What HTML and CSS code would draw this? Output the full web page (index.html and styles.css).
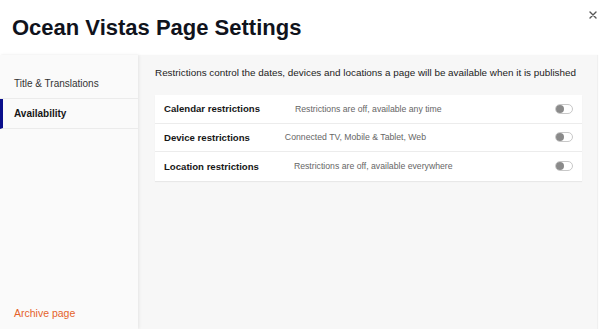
FILE: index.html
```html
<!DOCTYPE html>
<html lang="en">
<head>
    <meta charset="UTF-8">
    <meta name="viewport" content="width=device-width, initial-scale=1.0">
    <title>Ocean Vistas Page Settings</title>
    <link rel="stylesheet" href="styles.css">
</head>
<body>
    <div class="dialog">
        <header class="dialog-header">
            <h1>Ocean Vistas Page Settings</h1>
            <button class="close-btn" aria-label="Close">
                <svg width="8" height="8" viewBox="0 0 8 8">
                    <path d="M1 1 L7 7 M7 1 L1 7" stroke="#555" stroke-width="1.4" stroke-linecap="round"/>
                </svg>
            </button>
        </header>
        <div class="dialog-body">
            <nav class="sidebar">
                <a class="nav-item">Title &amp; Translations</a>
                <a class="nav-item active">Availability</a>
                <a class="archive-link">Archive page</a>
            </nav>
            <main class="content">
                <p class="intro">Restrictions control the dates, devices and locations a page will be available when it is published</p>
                <div class="card">
                    <div class="row">
                        <span class="row-label">Calendar restrictions</span>
                        <span class="row-value">Restrictions are off, available any time</span>
                        <span class="toggle"></span>
                    </div>
                    <div class="row">
                        <span class="row-label">Device restrictions</span>
                        <span class="row-value">Connected TV, Mobile &amp; Tablet, Web</span>
                        <span class="toggle"></span>
                    </div>
                    <div class="row">
                        <span class="row-label">Location restrictions</span>
                        <span class="row-value">Restrictions are off, available everywhere</span>
                        <span class="toggle"></span>
                    </div>
                </div>
            </main>
        </div>
    </div>
</body>
</html>
```

FILE: styles.css
```css
/* General styles */
body {
    margin: 0;
    font-family: "Liberation Sans", Arial, sans-serif;
    color: #1a1a1a;
    background: #ffffff;
}

.dialog {
    display: flex;
    flex-direction: column;
    height: 329px;
}

.dialog-header {
    height: 55px;
    display: flex;
    align-items: flex-start;
    justify-content: space-between;
    background: #ffffff;
}

.dialog-header h1 {
    margin: 15px 0 0 12px;
    font-size: 22px;
    font-weight: 700;
    color: #10131c;
}

.close-btn {
    border: none;
    background: none;
    padding: 0;
    margin: 7px 3px 0 0;
    width: 8px;
    height: 8px;
    cursor: pointer;
}

.dialog-body {
    flex: 1;
    display: flex;
    background: #f7f7f7;
    margin-right: 3px;
    box-shadow: 1px 0 1px rgba(0, 0, 0, 0.06);
}

/* Sidebar */
.sidebar {
    width: 138px;
    display: flex;
    flex-direction: column;
    padding-top: 14px;
    background: #fafafa;
    box-shadow: 1px 0 3px rgba(0, 0, 0, 0.08);
}

.nav-item {
    height: 29px;
    line-height: 29px;
    padding-left: 14px;
    font-size: 10px;
    color: #333333;
    border-bottom: 1px solid #ebebeb;
}

.nav-item.active {
    font-weight: 700;
    color: #161616;
    padding-left: 11px;
    border-left: 3px solid #0a0f8c;
}

.archive-link {
    margin-top: auto;
    padding: 0 0 10px 14px;
    font-size: 10.5px;
    color: #e5622a;
}

/* Main content */
.content {
    flex: 1;
    padding: 0 15px 0 17px;
}

.intro {
    margin: 12px 0 16px 0;
    font-size: 9.9px;
    line-height: 12px;
    color: #222222;
    white-space: nowrap;
}

.card {
    background: #ffffff;
    box-shadow: 0 1px 1px rgba(0, 0, 0, 0.06);
}

.row {
    box-sizing: border-box;
    display: flex;
    align-items: center;
    height: 28.5px;
    padding: 0 9px;
    border-bottom: 1px solid #ececec;
}

.row:last-child {
    border-bottom: none;
}

.row-label {
    font-size: 9.6px;
    font-weight: 700;
    color: #161616;
    margin-right: 35px;
}

.row-value {
    flex: 1;
    font-size: 8.7px;
    color: #666666;
}

.toggle {
    position: relative;
    width: 16px;
    height: 8px;
    border: 1px solid #c8c8c8;
    border-radius: 5px;
    background: #ffffff;
}

.toggle::after {
    content: '';
    position: absolute;
    left: 0;
    top: 0;
    width: 8px;
    height: 8px;
    border-radius: 50%;
    background: #8a8a8a;
}
```
